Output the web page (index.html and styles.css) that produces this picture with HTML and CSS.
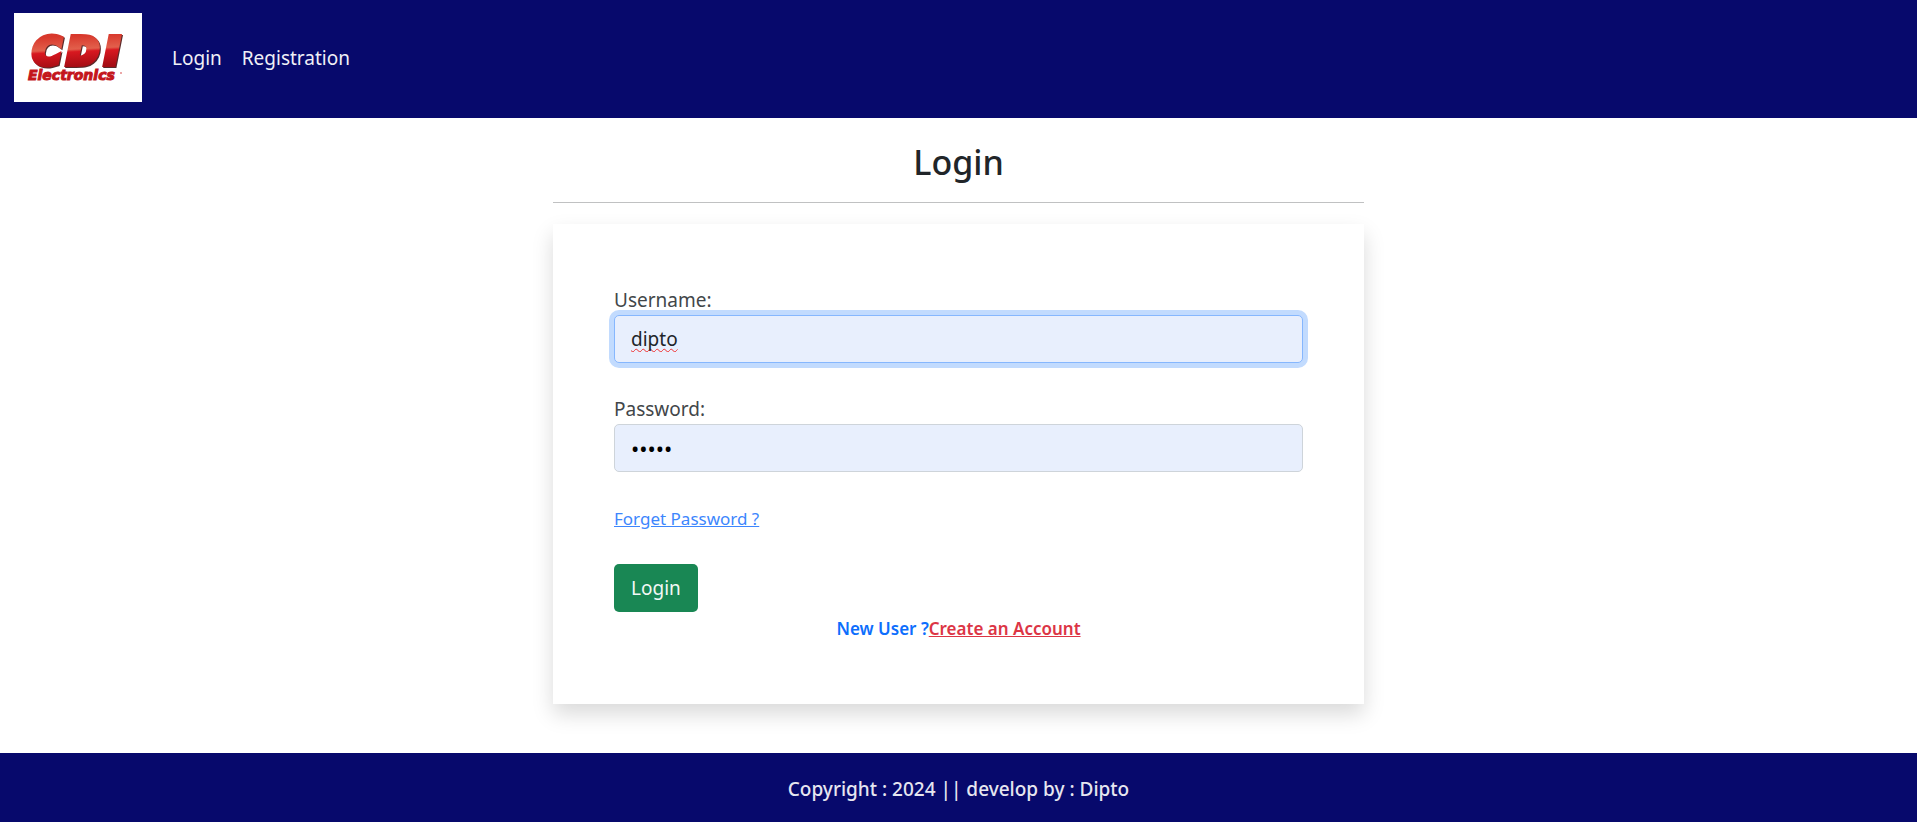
FILE: index.html
```html
<!DOCTYPE html>
<html lang="en">
<head>
<meta charset="utf-8">
<meta name="viewport" content="width=device-width, initial-scale=1">
<title>Login</title>
<link rel="stylesheet" href="styles.css">
</head>
<body>
<header class="navbar">
  <a class="brand" href="#">
    <svg class="logo" viewBox="0 0 128 89" role="img" aria-label="CDI Electronics">
      <defs>
        <linearGradient id="red" x1="0" y1="0" x2="0.1" y2="1">
          <stop offset=".2" stop-color="#d8382c"/>
          <stop offset=".5" stop-color="#e2604c"/>
          <stop offset=".56" stop-color="#d81820"/>
          <stop offset=".9" stop-color="#a50d14"/>
        </linearGradient>
      </defs>
      <rect width="128" height="89" fill="#fff"/>
      <text class="logo-big" x="19 53 91" y="51" fill="url(#red)" stroke="url(#red)">CDI</text>
      <text class="logo-small" x="14" y="67" fill="#c4161c" stroke="#c4161c">Electronics</text>
      <circle cx="107" cy="60" r="1" fill="#e58a8a"/>
    </svg>
  </a>
  <nav class="nav-links">
    <a href="#">Login</a>
    <a href="#">Registration</a>
  </nav>
</header>
<main class="content">
  <h1 class="title">Login</h1>
  <hr class="rule">
  <form class="card">
    <div class="field">
      <label for="username">Username:</label>
      <input class="control focused misspelled" id="username" type="text" value="dipto">
    </div>
    <div class="field">
      <label for="password">Password:</label>
      <input class="control secret" id="password" type="password" value="dipto">
    </div>
    <a class="forgot" href="#">Forget Password ?</a>
    <button class="submit" type="submit">Login</button>
    <p class="signup">New User ?<a href="#">Create an Account</a></p>
  </form>
</main>
<footer class="footer">Copyright : 2024 || develop by : Dipto</footer>
</body>
</html>
```
FILE: styles.css
```css
* { box-sizing: border-box; }
body {
  margin: 0;
  min-height: 100vh;
  display: flex;
  flex-direction: column;
  font-family: "Noto Sans", "Open Sans", sans-serif;
  font-size: 19px;
  line-height: 30px;
  color: #212529;
  background: #fff;
}
.navbar {
  display: flex;
  align-items: center;
  gap: 30px;
  padding: 13px 14px 16px;
  background: #07096c;
}
.brand { display: block; }
.logo { display: block; width: 128px; height: 89px; }
.logo-big {
  font: italic bold 38px "DejaVu Sans", sans-serif;
  stroke-width: 6;
  filter: drop-shadow(1px 1px 0 #5a2a2a);
}
.logo-small { font: italic bold 14px "DejaVu Sans", sans-serif; stroke-width: 1; }
.nav-links { display: flex; gap: 20px; }
.nav-links a { color: #f0f0f6; text-decoration: none; }
.content {
  flex: 1;
  width: 100%;
  max-width: 843px;
  margin: 0 auto;
  padding: 22px 16px 48px;
}
.title {
  margin: 0;
  font-size: 34px;
  font-weight: 500;
  line-height: 44px;
  text-align: center;
}
.rule {
  margin: 18px 0 21px;
  border: 0;
  border-top: 1px solid #c0c1c2;
}
.card {
  display: flex;
  flex-direction: column;
  align-items: flex-start;
  padding: 62px 61px 60px;
  background: #fff;
  box-shadow: 0 10px 20px rgba(0, 0, 0, .15);
}
.field {
  display: flex;
  flex-direction: column;
  width: 100%;
  margin-bottom: 32px;
}
.field label { line-height: 29px; color: #424649; }
.control {
  width: 100%;
  height: 48px;
  padding: 8px 16px;
  border: 1px solid #ced4da;
  border-radius: 5px;
  background: #e8effd;
  color: #212529;
  font: inherit;
  outline: none;
}
.focused {
  border-color: #86b7fe;
  box-shadow: 0 0 0 5px #c2dbfe;
}
.misspelled {
  text-decoration: underline wavy #f03030 1px;
  text-decoration-skip-ink: none;
  text-underline-offset: 2px;
}
.secret { font-size: 22px; color: #000; }
.forgot {
  margin-bottom: 30px;
  font-size: 17px;
  color: #3d86fd;
}
.submit {
  height: 48px;
  padding: 0 17px;
  border: 0;
  border-radius: 5px;
  background: #198754;
  color: #f2f8f5;
  font: inherit;
}
.signup {
  align-self: center;
  margin: 2px 0 0;
  font-size: 17px;
  font-weight: 600;
  color: #0d6efd;
}
.signup a { color: #dc3545; }
.footer {
  padding: 21px 20px 18px;
  background: #07096c;
  color: #e6e6f0;
  font-weight: 500;
  text-align: center;
}
```
